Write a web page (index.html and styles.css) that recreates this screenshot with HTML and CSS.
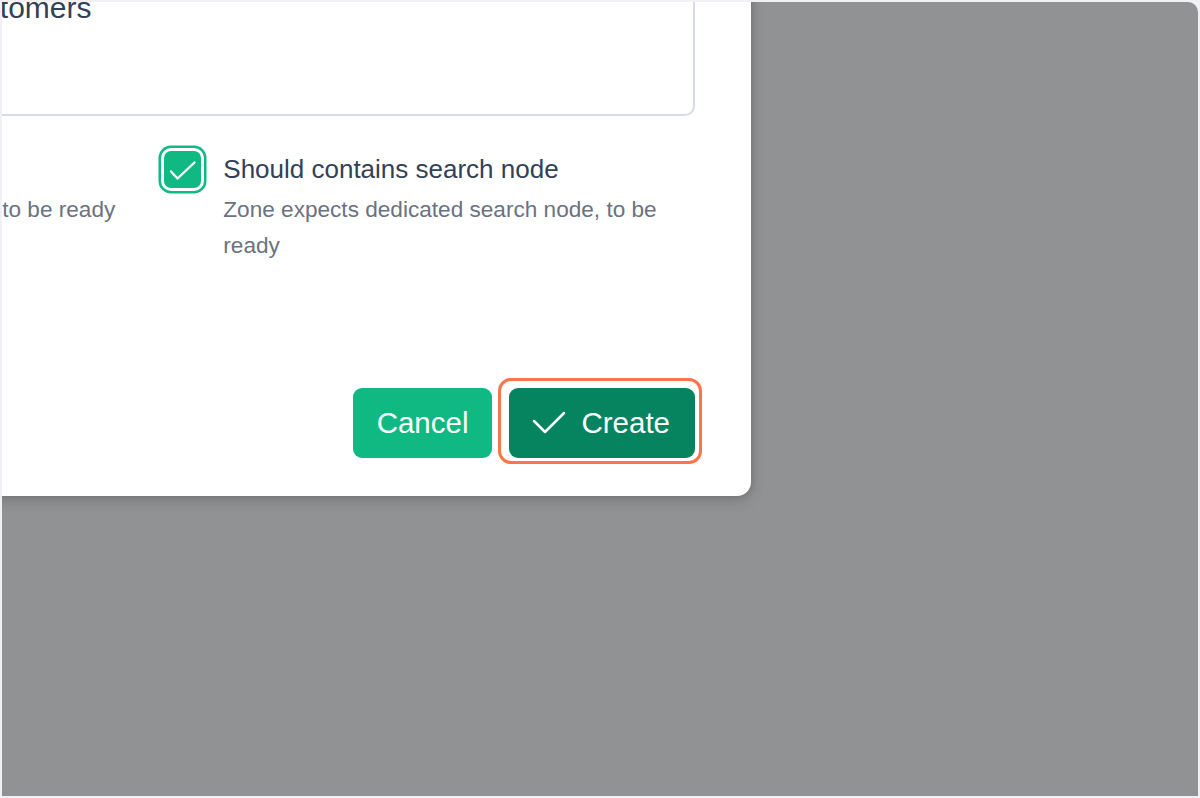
FILE: index.html
```html
<!DOCTYPE html>
<html lang="en">
<head>
<meta charset="utf-8">
<title>Create zone</title>
<link rel="stylesheet" href="styles.css">
</head>
<body>
<div class="frame">
  <div class="modal">
    <div class="textarea">Primary zone for business customers</div>
    <div class="options">
      <div class="option">
        <span class="checkbox"></span>
        <div class="option-text">
          <div class="option-label">Should contains data node</div>
          <div class="option-desc nowrap">Zone expects dedicated data node, to be ready</div>
        </div>
      </div>
      <div class="option">
        <span class="checkbox checked focused">
          <svg viewBox="0 0 37 37" width="37" height="37"><polyline points="7,20.5 13.5,27.5 30.5,11.5" fill="none" stroke="#fff" stroke-width="2.4" stroke-linecap="round" stroke-linejoin="round"/></svg>
        </span>
        <div class="option-text">
          <div class="option-label">Should contains search node</div>
          <div class="option-desc">Zone expects dedicated search node, to be ready</div>
        </div>
      </div>
    </div>
    <div class="actions">
      <button class="btn btn-cancel">Cancel</button>
      <button class="btn btn-create">
        <svg class="btn-icon" viewBox="0 0 34 28" width="34" height="28"><polyline points="2,12 13,23 32,4" fill="none" stroke="#fff" stroke-width="2.5" stroke-linecap="round" stroke-linejoin="round"/></svg>
        <span>Create</span>
      </button>
    </div>
  </div>
</div>
</body>
</html>
```

FILE: styles.css
```css
html, body {
  margin: 0;
  padding: 0;
}

body {
  background: #f1f0f5;
  font-family: "Liberation Sans", Arial, sans-serif;
}

.frame {
  margin: 2px;
  height: 794px;
  background: #919294;
  border-radius: 0 10px 0 0;
  overflow: hidden;
}

.modal {
  width: 1208px;
  box-sizing: border-box;
  margin: -28px 0 0 -459px;
  padding: 0 56px 38px 40px;
  background: #ffffff;
  border-radius: 0 0 14px 0;
  box-shadow: 0 4px 14px rgba(0, 0, 0, 0.18), 2px 0 4px rgba(0, 0, 0, 0.08);
}

.textarea {
  box-sizing: border-box;
  height: 142px;
  border: 2px solid #d5dce6;
  border-radius: 10px;
  padding: 12px 16px 12px 13px;
  font-size: 30px;
  line-height: 40px;
  color: #334155;
}

.options {
  display: grid;
  grid-template-columns: 1fr 1fr;
  column-gap: 48px;
  margin-top: 35px;
}

.option {
  display: flex;
  align-items: flex-start;
  gap: 22px;
}

.checkbox {
  flex: none;
  width: 37px;
  height: 37px;
  margin-left: 1px;
  box-sizing: border-box;
  border: 2px solid #cbd5e1;
  border-radius: 7px;
  background: #fff;
  display: flex;
}

.checkbox.checked {
  border: none;
  background: #10b981;
}

.checkbox.focused {
  box-shadow: 0 0 0 3px #ffffff, 0 0 0 5.5px #10b981;
}

.option-text {
  min-width: 0;
}

.option-label {
  font-size: 26px;
  line-height: 37px;
  margin-bottom: 4px;
  color: #334155;
}

.option-desc {
  font-size: 22.6px;
  line-height: 36px;
  color: #6b7280;
}

.nowrap {
  white-space: nowrap;
}

.actions {
  display: flex;
  justify-content: flex-end;
  gap: 17px;
  margin-top: 124px;
}

.btn {
  height: 70px;
  border: none;
  border-radius: 9px;
  padding: 0 24px;
  font-family: "Liberation Sans", Arial, sans-serif;
  font-size: 29.5px;
  color: #ffffff;
  display: flex;
  align-items: center;
  gap: 15px;
}

.btn-cancel {
  background: #10b981;
}

.btn-create {
  background: #05845f;
  padding: 0 25px 0 23px;
  position: relative;
}

.btn-create::after {
  content: "";
  position: absolute;
  top: -10px;
  left: -11px;
  right: -7px;
  bottom: -6px;
  border: 3px solid #fa7547;
  border-radius: 13px;
  pointer-events: none;
}

.btn-icon {
  flex: none;
}
```
